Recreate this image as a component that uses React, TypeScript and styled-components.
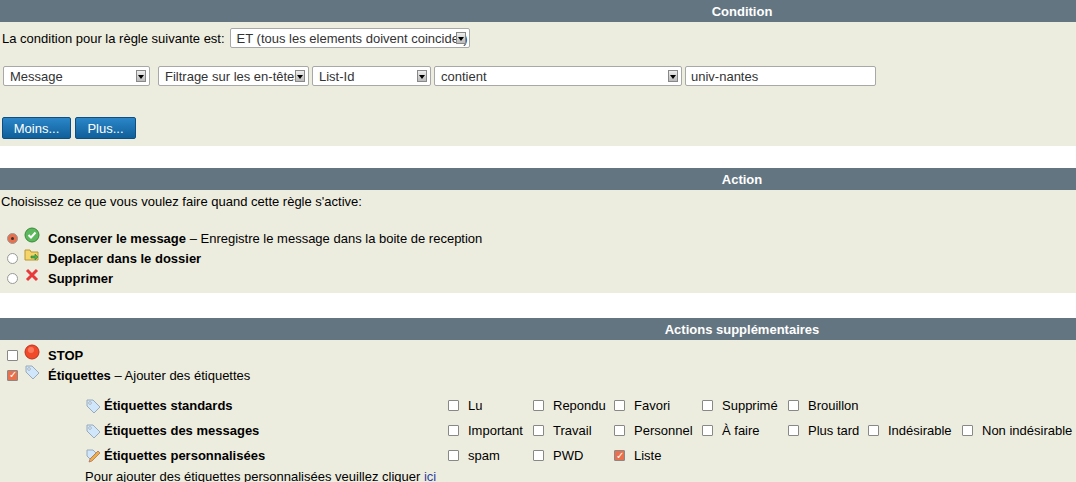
import React from "react";
import styled, { createGlobalStyle } from "styled-components";

const G = createGlobalStyle`
  body { margin: 0; background: #fff; font-family: "Liberation Sans", Arial, sans-serif; font-size: 13px; color: #000; }
`;
const Section = styled.div<{ $pb?: number }>`
  background: #ededdf; padding-bottom: ${p => p.$pb ?? 0}px;
`;
const Gap = styled.div<{ $h: number }>` height: ${p => p.$h}px; background: #fff; `;
const Header = styled.div`
  background: #637580; color: #fff; font-weight: bold; height: 22px; line-height: 23px;
  padding-left: 408px; text-align: center;
`;
const Row = styled.div<{ $mt?: number; $pl?: number; $gap?: number }>`
  display: flex; align-items: center; margin-top: ${p => p.$mt ?? 0}px; padding-left: ${p => p.$pl ?? 3}px; gap: ${p => p.$gap ?? 3}px;
`;
const Sel = styled.div<{ $w: number }>`
  width: ${p => p.$w}px; height: 20px; box-sizing: border-box; border: 1px solid #a8a8a8; border-radius: 2px;
  background: #fff; display: flex; align-items: center; padding-left: 6px; color: #333; position: relative;
`;
const Arrow = styled.span`
  position: absolute; right: 3px; top: 3px; width: 10px; height: 12px; background: linear-gradient(#eee,#bbb);
  border: 1px solid #888; box-sizing: border-box;
  &::after { content: ""; position: absolute; left: 1px; top: 4px; border-left: 3px solid transparent; border-right: 3px solid transparent; border-top: 4px solid #000; }
`;
const Input = styled.div`
  width: 191px; height: 20px; box-sizing: border-box; border: 1px solid #a8a8a8; border-radius: 2px; background: #fff;
  display: flex; align-items: center; padding-left: 5px; color: #333;
`;
const Btn = styled.div<{ $w: number }>`
  width: ${p => p.$w}px; height: 22px; border-radius: 2px; background: linear-gradient(#2b86c8, #0f5f9a);
  border: 1px solid #0c4f80; box-sizing: border-box; color: #fff; display: flex; align-items: center; justify-content: center;
`;
const Radio = styled.span<{ $on?: boolean }>`
  width: 11px; height: 11px; border-radius: 50%; border: 1px solid #999; box-sizing: border-box; background: ${p => p.$on ? "#e9704b" : "#fff"};
  display: inline-flex; align-items: center; justify-content: center;
  &::after { content: ""; width: 3px; height: 3px; border-radius: 50%; background: ${p => p.$on ? "#333" : "transparent"}; }
`;
const Check = styled.span<{ $on?: boolean }>`
  width: 11px; height: 11px; border: 1px solid #888; box-sizing: border-box; border-radius: 1px; background: ${p => p.$on ? "#e9704b" : "#fff"};
  display: inline-flex; align-items: center; justify-content: center; color: #fff; font-size: 10px; line-height: 1; flex: none;
`;
const Line = styled.div<{ $h: number }>`
  display: flex; align-items: center; height: ${p => p.$h}px; padding-left: 7px; gap: 6px;
`;
const Ico = styled.span` width: 16px; height: 16px; display: inline-flex; margin-right: 2px; position: relative; top: -3px; `;
const Grid = styled.div`
  display: grid; grid-template-columns: 85px 363px 85px 81px 88px 86px 80px 94px auto; grid-auto-rows: 25px; align-items: center; margin-top: 8px;
`;
const Cell = styled.div` display: flex; align-items: center; gap: 9px; `;
const Lbl = styled.div` grid-column: 2; display: flex; align-items: center; font-weight: bold; gap: 3px; `;
const Foot = styled.div` padding-left: 85px; height: 20px; line-height: 18px; `;
const A = styled.span` color: #2f3ea0; `;

const Tag = () => (
  <svg width="16" height="16" viewBox="0 0 16 16"><path d="M2 2h6l7 7-6 6-7-7z" fill="#cfe6fb" stroke="#9ab" /><circle cx="5" cy="5" r="1.3" fill="#fff" stroke="#789" strokeWidth=".6" /></svg>
);
const Pencil = () => (
  <svg width="16" height="16" viewBox="0 0 16 16"><path d="M2 2h6l3 3-6 6-3-3z" fill="#cfe6fb" stroke="#9ab" /><path d="M4 14l1-3 8-8 2 2-8 8z" fill="#f0b040" stroke="#a66" strokeWidth=".7" /></svg>
);
const Ok = () => (<svg width="16" height="16" viewBox="0 0 16 16"><circle cx="8" cy="8" r="7" fill="#5cb85c" stroke="#3a8a3a" /><path d="M4.5 8l2.5 2.5 4.5-5" stroke="#fff" strokeWidth="2" fill="none" /></svg>);
const Folder = () => (<svg width="16" height="16" viewBox="0 0 16 16"><path d="M1 3h5l1 2h7v8H1z" fill="#f5d56a" stroke="#b8962e" /><path d="M7 9h4V7l3 3-3 3v-2H7z" fill="#4caf50" stroke="#2e7d32" strokeWidth=".6" /></svg>);
const X = () => (<svg width="16" height="16" viewBox="0 0 16 16"><path d="M3 3l10 10M13 3L3 13" stroke="#e83a3a" strokeWidth="3" /></svg>);
const Stop = () => (<svg width="16" height="16" viewBox="0 0 16 16"><circle cx="8" cy="8" r="7" fill="#f04a2a" stroke="#c03018" /><circle cx="7" cy="6" r="3" fill="#ff9a80" opacity=".6" /></svg>);

const C = ({ t, on }: { t: string; on?: boolean }) => (<Cell><Check $on={on}>{on ? "✓" : ""}</Check>{t}</Cell>);

export default function App() {
  return (
    <>
      <G />
      <Section $pb={7}>
        <Header>Condition</Header>
        <Row $mt={6} $gap={5}>
          <span style={{ marginLeft: -1 }}>La condition pour la règle suivante est:</span>
          <Sel $w={240}>ET (tous les elements doivent coincider)<Arrow /></Sel>
        </Row>
        <Row $mt={18}>
          <Sel $w={147}>Message<Arrow /></Sel>
          <span style={{ width: 2 }} />
          <Sel $w={151}>Filtrage sur les en-têtes<Arrow /></Sel>
          <Sel $w={119}>List-Id<Arrow /></Sel>
          <Sel $w={248}>contient<Arrow /></Sel>
          <Input>univ-nantes</Input>
        </Row>
        <Row $mt={31} $pl={2} $gap={4}>
          <Btn $w={69}>Moins...</Btn><Btn $w={61}>Plus...</Btn>
        </Row>
      </Section>
      <Gap $h={22} />
      <Section $pb={5}>
        <Header>Action</Header>
        <Row $mt={4} $pl={1}>Choisissez ce que vous voulez faire quand cette règle s'active:</Row>
        <div style={{ height: 19 }} />
        <Line $h={20}><Radio $on /><Ico><Ok /></Ico><span><b>Conserver le message</b> – Enregistre le message dans la boite de reception</span></Line>
        <Line $h={20}><Radio /><Ico><Folder /></Ico><b>Deplacer dans le dossier</b></Line>
        <Line $h={20}><Radio /><Ico><X /></Ico><b>Supprimer</b></Line>
      </Section>
      <Gap $h={25} />
      <Section>
        <Header>Actions supplémentaires</Header>
        <div style={{ height: 5 }} />
        <Line $h={20}><Check /><Ico><Stop /></Ico><b>STOP</b></Line>
        <Line $h={20}><Check $on>✓</Check><Ico><Tag /></Ico><span><b>Étiquettes</b> – Ajouter des étiquettes</span></Line>
        <Grid>
          <Lbl><Tag />Étiquettes standards</Lbl>
          <C t="Lu" /><C t="Repondu" /><C t="Favori" /><C t="Supprimé" /><C t="Brouillon" /><div /><div />
          <Lbl><Tag />Étiquettes des messages</Lbl>
          <C t="Important" /><C t="Travail" /><C t="Personnel" /><C t="À faire" /><C t="Plus tard" /><C t="Indésirable" /><C t="Non indésirable" />
          <Lbl><Pencil />Étiquettes personnalisées</Lbl>
          <C t="spam" /><C t="PWD" /><C t="Liste" on /><div /><div /><div /><div />
        </Grid>
        <Foot>Pour ajouter des étiquettes personnalisées veuillez cliquer <A>ici</A></Foot>
      </Section>
    </>
  );
}
